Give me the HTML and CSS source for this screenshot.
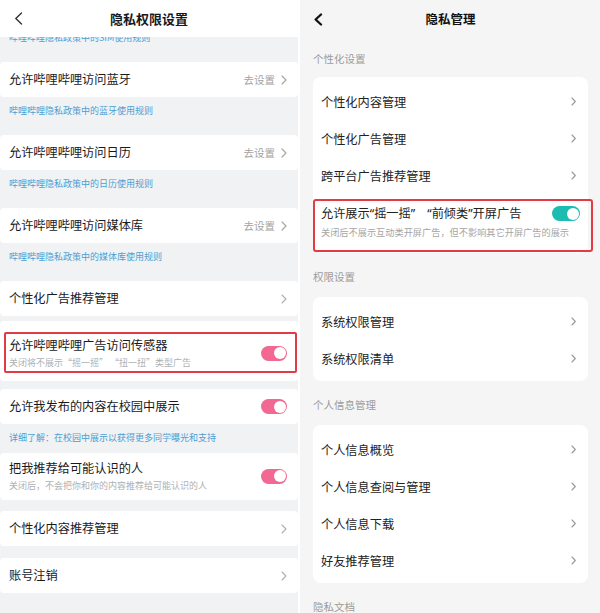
FILE: index.html
```html
<!DOCTYPE html>
<html lang="zh-CN">
<head>
<meta charset="utf-8">
<title>隐私设置</title>
<link rel="stylesheet" href="styles.css">
</head>
<body>
<div class="page">
  <section class="phone phone-left">
    <header class="bar bar-left">
      <span class="back"><svg width="9" height="13" viewBox="0 0 9 13"><polyline points="7.5,1 1.8,6.5 7.5,12" fill="none" stroke="#333" stroke-width="1.4" stroke-linecap="round" stroke-linejoin="round"/></svg></span>
      <h1 class="bar-title">隐私权限设置</h1>
      <span></span>
    </header>
    <div class="scroll">
      <p class="note note-first">哔哩哔哩隐私政策中的SIM使用规则</p>
      <div class="lcard">
        <span class="ltext">允许哔哩哔哩访问蓝牙</span>
        <span class="action">去设置<svg class="lchev" width="6" height="10" viewBox="0 0 6 10"><polyline points="1,1 5,5 1,9" fill="none" stroke="#a8a8a8" stroke-width="1.2" stroke-linecap="round" stroke-linejoin="round"/></svg></span>
      </div>
      <p class="note">哔哩哔哩隐私政策中的蓝牙使用规则</p>
      <div class="lcard">
        <span class="ltext">允许哔哩哔哩访问日历</span>
        <span class="action">去设置<svg class="lchev" width="6" height="10" viewBox="0 0 6 10"><polyline points="1,1 5,5 1,9" fill="none" stroke="#a8a8a8" stroke-width="1.2" stroke-linecap="round" stroke-linejoin="round"/></svg></span>
      </div>
      <p class="note">哔哩哔哩隐私政策中的日历使用规则</p>
      <div class="lcard">
        <span class="ltext">允许哔哩哔哩访问媒体库</span>
        <span class="action">去设置<svg class="lchev" width="6" height="10" viewBox="0 0 6 10"><polyline points="1,1 5,5 1,9" fill="none" stroke="#a8a8a8" stroke-width="1.2" stroke-linecap="round" stroke-linejoin="round"/></svg></span>
      </div>
      <p class="note">哔哩哔哩隐私政策中的媒体库使用规则</p>
      <div class="lcard">
        <span class="ltext">个性化广告推荐管理</span>
        <svg class="lchev" width="6" height="10" viewBox="0 0 6 10"><polyline points="1,1 5,5 1,9" fill="none" stroke="#b0b0b0" stroke-width="1.1" stroke-linecap="round" stroke-linejoin="round"/></svg>
      </div>
      <div class="lcard lcard-marked">
        <div class="lstack">
          <span class="ltext">允许哔哩哔哩广告访问传感器</span>
          <span class="lsub">关闭将不展示“摇一摇” “扭一扭”类型广告</span>
        </div>
        <span class="switch switch-pink"><span class="knob"></span></span>
      </div>
      <div class="lcard lcard-gap">
        <span class="ltext">允许我发布的内容在校园中展示</span>
        <span class="switch switch-pink"><span class="knob"></span></span>
      </div>
      <p class="note note-tight">详细了解：在校园中展示以获得更多同学曝光和支持</p>
      <div class="lcard lcard-tall">
        <div class="lstack">
          <span class="ltext">把我推荐给可能认识的人</span>
          <span class="lsub">关闭后，不会把你和你的内容推荐给可能认识的人</span>
        </div>
        <span class="switch switch-pink"><span class="knob"></span></span>
      </div>
      <div class="lcard lcard-gap2">
        <span class="ltext">个性化内容推荐管理</span>
        <svg class="lchev" width="6" height="10" viewBox="0 0 6 10"><polyline points="1,1 5,5 1,9" fill="none" stroke="#b0b0b0" stroke-width="1.1" stroke-linecap="round" stroke-linejoin="round"/></svg>
      </div>
      <div class="lcard lcard-gap3">
        <span class="ltext">账号注销</span>
        <svg class="lchev" width="6" height="10" viewBox="0 0 6 10"><polyline points="1,1 5,5 1,9" fill="none" stroke="#b0b0b0" stroke-width="1.1" stroke-linecap="round" stroke-linejoin="round"/></svg>
      </div>
    </div>
  </section>

  <section class="phone phone-right">
    <header class="bar bar-right">
      <span class="back"><svg width="10" height="13" viewBox="0 0 10 13"><polyline points="8,1.5 2.6,6.5 8,11.5" fill="none" stroke="#111" stroke-width="2.3" stroke-linecap="round" stroke-linejoin="round"/></svg></span>
      <h1 class="bar-title bar-title-right">隐私管理</h1>
      <span></span>
    </header>
    <div class="section-label section-first">个性化设置</div>
    <div class="rcard">
      <div class="rrow"><span>个性化内容管理</span><svg width="5" height="9" viewBox="0 0 5 9"><polyline points="1,1 4.3,4.5 1,8" fill="none" stroke="#999" stroke-width="1.1" stroke-linecap="round" stroke-linejoin="round"/></svg></div>
      <div class="rrow"><span>个性化广告管理</span><svg width="5" height="9" viewBox="0 0 5 9"><polyline points="1,1 4.3,4.5 1,8" fill="none" stroke="#999" stroke-width="1.1" stroke-linecap="round" stroke-linejoin="round"/></svg></div>
      <div class="rrow"><span>跨平台广告推荐管理</span><svg width="5" height="9" viewBox="0 0 5 9"><polyline points="1,1 4.3,4.5 1,8" fill="none" stroke="#999" stroke-width="1.1" stroke-linecap="round" stroke-linejoin="round"/></svg></div>
      <div class="rrow-toggle">
        <span class="rtitle">允许展示“摇一摇”&#8195;“前倾类”开屏广告</span>
        <span class="switch switch-teal"><span class="knob"></span></span>
        <span class="rsub">关闭后不展示互动类开屏广告，但不影响其它开屏广告的展示</span>
      </div>
    </div>
    <div class="section-label">权限设置</div>
    <div class="rcard">
      <div class="rrow"><span>系统权限管理</span><svg width="5" height="9" viewBox="0 0 5 9"><polyline points="1,1 4.3,4.5 1,8" fill="none" stroke="#999" stroke-width="1.1" stroke-linecap="round" stroke-linejoin="round"/></svg></div>
      <div class="rrow"><span>系统权限清单</span><svg width="5" height="9" viewBox="0 0 5 9"><polyline points="1,1 4.3,4.5 1,8" fill="none" stroke="#999" stroke-width="1.1" stroke-linecap="round" stroke-linejoin="round"/></svg></div>
    </div>
    <div class="section-label">个人信息管理</div>
    <div class="rcard">
      <div class="rrow"><span>个人信息概览</span><svg width="5" height="9" viewBox="0 0 5 9"><polyline points="1,1 4.3,4.5 1,8" fill="none" stroke="#999" stroke-width="1.1" stroke-linecap="round" stroke-linejoin="round"/></svg></div>
      <div class="rrow"><span>个人信息查阅与管理</span><svg width="5" height="9" viewBox="0 0 5 9"><polyline points="1,1 4.3,4.5 1,8" fill="none" stroke="#999" stroke-width="1.1" stroke-linecap="round" stroke-linejoin="round"/></svg></div>
      <div class="rrow"><span>个人信息下载</span><svg width="5" height="9" viewBox="0 0 5 9"><polyline points="1,1 4.3,4.5 1,8" fill="none" stroke="#999" stroke-width="1.1" stroke-linecap="round" stroke-linejoin="round"/></svg></div>
      <div class="rrow"><span>好友推荐管理</span><svg width="5" height="9" viewBox="0 0 5 9"><polyline points="1,1 4.3,4.5 1,8" fill="none" stroke="#999" stroke-width="1.1" stroke-linecap="round" stroke-linejoin="round"/></svg></div>
    </div>
    <div class="section-label">隐私文档</div>
  </section>
</div>
</body>
</html>
```

FILE: styles.css
```css
* {
  box-sizing: border-box;
  margin: 0;
  padding: 0;
}

html, body {
  width: 600px;
  height: 613px;
  overflow: hidden;
}

body {
  background: #ffffff;
  font-family: "Noto Sans CJK SC", "Noto Sans", sans-serif;
  color: #1a1a1a;
}

.page {
  display: flex;
  gap: 2px;
  height: 613px;
}

.phone {
  height: 613px;
  overflow: hidden;
}

/* ---------- left screen ---------- */
.phone-left {
  width: 298px;
  background: #f1f2f4;
  display: flex;
  flex-direction: column;
}

.bar {
  display: grid;
  grid-template-columns: 1fr auto 1fr;
  align-items: center;
}

.bar-left {
  height: 37px;
  background: #ffffff;
  padding: 0 14px;
  flex: none;
}

.back {
  display: flex;
  align-items: center;
}

.bar-title {
  font-size: 13px;
  font-weight: 700;
  color: #18191c;
  line-height: 18px;
}

.bar-title-right {
  font-size: 12.5px;
  color: #111111;
}

.scroll {
  flex: 1;
  overflow: hidden;
}

.note {
  font-size: 9px;
  line-height: 12px;
  color: #4b9fd3;
  padding: 8px 9px 18px;
  white-space: nowrap;
}

.note-first {
  margin-top: -13px;
}

.note-tight {
  padding-bottom: 9px;
}

.lcard {
  background: #ffffff;
  border-radius: 4px;
  height: 35px;
  padding: 0 11px 0 9px;
  display: flex;
  align-items: center;
  justify-content: space-between;
}

.ltext {
  font-size: 12.2px;
  line-height: 17px;
  color: #18191c;
  white-space: nowrap;
}

.action {
  display: flex;
  align-items: center;
  gap: 6px;
  font-size: 10.5px;
  color: #a3a3a3;
}

.lchev {
  display: block;
}

.lstack {
  display: flex;
  flex-direction: column;
  gap: 2px;
}

.lsub {
  font-size: 9px;
  line-height: 13px;
  color: #aeb1b6;
  white-space: nowrap;
}

.lcard-marked {
  position: relative;
  height: auto;
  margin-top: 5px;
  padding: 16px 11px 12px 9px;
}

.lcard-marked::after {
  content: "";
  position: absolute;
  left: 4px;
  right: 1px;
  top: 11px;
  bottom: 8px;
  border: 2px solid #e33a44;
  border-radius: 2px;
}

.lcard-gap {
  margin-top: 8px;
}

.lcard-tall {
  height: auto;
  padding: 7px 11px 8px 9px;
}

.lcard-gap2 {
  margin-top: 11px;
}

.lcard-gap3 {
  margin-top: 12px;
}

/* switches */
.switch {
  display: flex;
  align-items: center;
  justify-content: flex-end;
  width: 26px;
  height: 15px;
  padding: 1.5px;
  border-radius: 8px;
  flex: none;
}

.switch-pink {
  background: #f26892;
}

.switch-teal {
  width: 28px;
  background: #1cbdb0;
}

.knob {
  width: 12px;
  height: 12px;
  border-radius: 50%;
  background: #ffffff;
}

/* ---------- right screen ---------- */
.phone-right {
  width: 300px;
  background: #f5f5f5;
  padding: 0 12px 0 13px;
}

.bar-right {
  height: 38px;
}

.section-label {
  font-size: 10.5px;
  line-height: 14px;
  color: #9b9b9b;
  padding: 17px 0 13px;
}

.section-first {
  padding: 14px 0 11px;
}

.rcard {
  background: #ffffff;
  border-radius: 8px;
  padding: 6px 0 4px;
}

.rrow {
  height: 37px;
  display: flex;
  align-items: center;
  justify-content: space-between;
  padding: 0 12px 0 8px;
  font-size: 12.2px;
  color: #222222;
}

.rrow svg {
  display: block;
}

.rrow-toggle {
  position: relative;
  display: grid;
  grid-template-columns: 1fr auto;
  align-items: center;
  row-gap: 4px;
  padding: 11px 8px 10px 8px;
}

.rrow-toggle::after {
  content: "";
  position: absolute;
  left: 0;
  right: -5px;
  top: 5px;
  bottom: -3px;
  border: 2px solid #e33a44;
  border-radius: 3px;
}

.rtitle {
  font-family: "Noto Sans", "Noto Sans CJK SC", sans-serif;
  font-size: 12.2px;
  line-height: 17px;
  color: #222222;
  white-space: nowrap;
}

.rsub {
  grid-column: 1 / -1;
  font-size: 9.2px;
  line-height: 13px;
  color: #a5a5a5;
  white-space: nowrap;
}
```
